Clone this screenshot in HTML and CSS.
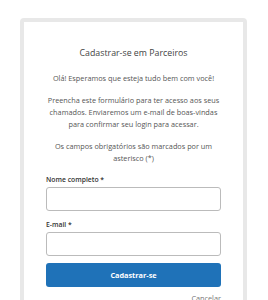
FILE: index.html
```html
<!DOCTYPE html>
<html lang="pt">
<head>
<meta charset="utf-8">
<link rel="stylesheet" href="styles.css">
</head>
<body>
<div class="card">
  <h1 class="title">Cadastrar-se em Parceiros</h1>
  <p class="intro">Olá! Esperamos que esteja tudo bem com você!</p>
  <p class="intro">Preencha este formulário para ter acesso aos seus chamados. Enviaremos um e-mail de boas-vindas para confirmar seu login para acessar.</p>
  <p class="intro">Os campos obrigatórios são marcados por um asterisco (*)</p>
  <form class="form">
    <label class="label">Nome completo *</label>
    <input class="input" type="text">
    <label class="label">E-mail *</label>
    <input class="input" type="email">
    <button class="btn" type="button">Cadastrar-se</button>
    <a class="cancel">Cancelar</a>
  </form>
</div>
</body>
</html>
```
FILE: styles.css
```css
html, body { margin: 0; padding: 0; background: #fff; }
body { font-family: "Open Sans", "Noto Sans", sans-serif; color: #555; }
.card {
  box-sizing: border-box;
  width: 227px;
  margin: 18px 0 0 20px;
  border: 4px solid #e8e8e8;
  border-radius: 4px;
  padding: 24px 22px 20px;
}
.title {
  margin: 0 0 12px;
  font-size: 8.8px;
  font-weight: 400;
  text-align: center;
  color: #444;
  line-height: 14px;
}
.intro {
  margin: 0 0 10px;
  font-size: 7.3px;
  line-height: 12px;
  text-align: center;
  color: #555;
}
.form { display: flex; flex-direction: column; margin-top: 10px; }
.label {
  font-size: 6.8px;
  font-weight: 600;
  color: #333;
  line-height: 12px;
  margin-bottom: 1px;
}
.input {
  box-sizing: border-box;
  height: 24px;
  width: 100%;
  border: 1px solid #bbb;
  border-radius: 3px;
  margin: 0 0 8px;
  padding: 0 6px;
}
.btn {
  box-sizing: border-box;
  height: 24px;
  width: 100%;
  border: 0;
  border-radius: 3px;
  background: #1f72b8;
  color: #fff;
  font-family: "Open Sans", "Noto Sans", sans-serif;
  font-weight: 700;
  font-size: 7.3px;
  margin-top: -1px;
}
.cancel {
  align-self: flex-end;
  margin-top: 6px;
  font-size: 7.3px;
  line-height: 10px;
  color: #777;
}
```
